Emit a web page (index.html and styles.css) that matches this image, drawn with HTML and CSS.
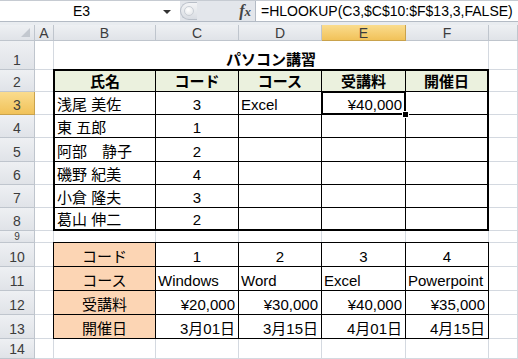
FILE: index.html
```html
<!DOCTYPE html>
<html lang="ja">
<head>
    <meta charset="UTF-8">
    <title>パソコン講習</title>
    <link rel="stylesheet" href="styles.css">
</head>
<body>
    <div class="app">
        <div class="formula-bar">
            <div class="name-box">
                <span class="name">E3</span>
                <span class="drop"></span>
            </div>
            <div class="bar-mid">
                <span class="grip"><span class="grip-dot"></span></span>
                <span class="fx">f<span class="fx-x">x</span></span>
            </div>
            <div class="formula">=HLOOKUP(C3,$C$10:$F$13,3,FALSE)</div>
        </div>
        <div class="bar-gap"></div>

        <div class="sheet">
            <!-- column headers -->
            <div class="hd corner"><span class="tri"></span></div>
            <div class="hd col">A</div>
            <div class="hd col">B</div>
            <div class="hd col">C</div>
            <div class="hd col">D</div>
            <div class="hd col active">E</div>
            <div class="hd col">F</div>
            <div class="hd col"></div>

            <!-- row 1 -->
            <div class="hd row">1</div>
            <div class="g"></div>
            <div class="g title">パソコン講習</div>
            <div class="g"></div>

            <div class="hd row">2</div><div class="g"></div><div class="g"></div>
            <div class="hd row active">3</div><div class="g"></div><div class="g"></div>
            <div class="hd row">4</div><div class="g"></div><div class="g"></div>
            <div class="hd row">5</div><div class="g"></div><div class="g"></div>
            <div class="hd row">6</div><div class="g"></div><div class="g"></div>
            <div class="hd row">7</div><div class="g"></div><div class="g"></div>
            <div class="hd row">8</div><div class="g"></div><div class="g"></div>

            <div class="hd row short">9</div>
            <div class="g"></div><div class="g"></div><div class="g"></div><div class="g"></div>
            <div class="g"></div><div class="g"></div><div class="g"></div>

            <div class="hd row">10</div><div class="g"></div><div class="g"></div>
            <div class="hd row">11</div><div class="g"></div><div class="g"></div>
            <div class="hd row">12</div><div class="g"></div><div class="g"></div>
            <div class="hd row">13</div><div class="g"></div><div class="g"></div>

            <div class="hd row">14</div>
            <div class="g"></div><div class="g"></div><div class="g"></div><div class="g"></div>
            <div class="g"></div><div class="g"></div><div class="g"></div>

            <!-- 受講者一覧 -->
            <div class="t1">
                <div class="tc th">氏名</div>
                <div class="tc th">コード</div>
                <div class="tc th">コース</div>
                <div class="tc th">受講料</div>
                <div class="tc th">開催日</div>

                <div class="tc">浅尾 美佐</div>
                <div class="tc ctr">3</div>
                <div class="tc">Excel</div>
                <div class="tc rt selected">¥40,000<span class="sel"><span class="handle"></span></span></div>
                <div class="tc"></div>

                <div class="tc">東 五郎</div>
                <div class="tc ctr">1</div>
                <div class="tc"></div><div class="tc"></div><div class="tc"></div>

                <div class="tc">阿部　静子</div>
                <div class="tc ctr">2</div>
                <div class="tc"></div><div class="tc"></div><div class="tc"></div>

                <div class="tc">磯野 紀美</div>
                <div class="tc ctr">4</div>
                <div class="tc"></div><div class="tc"></div><div class="tc"></div>

                <div class="tc">小倉 隆夫</div>
                <div class="tc ctr">3</div>
                <div class="tc"></div><div class="tc"></div><div class="tc"></div>

                <div class="tc">葛山 伸二</div>
                <div class="tc ctr">2</div>
                <div class="tc"></div><div class="tc"></div><div class="tc"></div>
            </div>

            <!-- コース表 -->
            <div class="t2">
                <div class="tc lab">コード</div>
                <div class="tc ctr">1</div>
                <div class="tc ctr">2</div>
                <div class="tc ctr">3</div>
                <div class="tc ctr">4</div>

                <div class="tc lab">コース</div>
                <div class="tc">Windows</div>
                <div class="tc">Word</div>
                <div class="tc">Excel</div>
                <div class="tc">Powerpoint</div>

                <div class="tc lab">受講料</div>
                <div class="tc rt">¥20,000</div>
                <div class="tc rt">¥30,000</div>
                <div class="tc rt">¥40,000</div>
                <div class="tc rt">¥35,000</div>

                <div class="tc lab">開催日</div>
                <div class="tc rt">3月01日</div>
                <div class="tc rt">3月15日</div>
                <div class="tc rt">4月01日</div>
                <div class="tc rt">4月15日</div>
            </div>
        </div>
    </div>
</body>
</html>
```

FILE: styles.css
```css
* {
    box-sizing: border-box;
}
body {
    margin: 0;
    background-color: #ffffff;
    font-family: "Liberation Sans", "Noto Sans CJK JP", sans-serif;
    color: #000;
}
.app {
    width: 518px;
    height: 359px;
    overflow: hidden;
}

/* formula bar */
.formula-bar {
    display: flex;
    height: 22px;
    border-top: 1px solid #c6cbd2;
    border-bottom: 1px solid #b4bbc5;
    background-color: #fff;
}
.name-box {
    display: flex;
    align-items: center;
    width: 180px;
}
.name {
    width: 163px;
    text-align: center;
    font-size: 14px;
    line-height: 20px;
}
.drop {
    width: 0;
    height: 0;
    margin-top: 2px;
    border-left: 4px solid transparent;
    border-right: 4px solid transparent;
    border-top: 4px solid #333;
}
.bar-mid {
    display: flex;
    align-items: center;
    width: 75px;
    background-color: #e3e6eb;
}
.grip {
    display: flex;
    align-items: center;
    justify-content: center;
    width: 17px;
    height: 18px;
    border: 1px solid #b9bfc8;
    border-right: none;
    border-radius: 9px 0 0 9px;
    background: linear-gradient(#f3f4f6, #d9dde3);
}
.grip-dot {
    width: 10px;
    height: 10px;
    border-radius: 50%;
    background: radial-gradient(circle at 40% 35%, #ffffff, #dfe2e6);
    border: 1px solid #c9ced5;
}
.fx {
    margin-left: auto;
    margin-right: 4px;
    font-family: "Liberation Serif", serif;
    font-style: italic;
    font-weight: bold;
    font-size: 16px;
    color: #444;
}
.fx-x {
    font-size: 13px;
}
.formula {
    flex: 1;
    padding-left: 5px;
    border-left: 1px solid #b4bbc5;
    font-size: 14px;
    line-height: 20px;
    white-space: nowrap;
}
.bar-gap {
    height: 3px;
    background-color: #e9ecf0;
}

/* sheet */
.sheet {
    display: grid;
    grid-template-columns: 35px 19px 102px 83px 83px 84px 83px 29px;
    grid-template-rows: 16px 29px 22px 23px 23px 24px 23px 23px 23px 12px 24px 24px 24px 24px 20px;
}
.hd {
    display: flex;
    justify-content: center;
    overflow: hidden;
    background: linear-gradient(#eef0f3, #e0e3e8);
    border-right: 1px solid #bfc5cd;
    border-bottom: 1px solid #bfc5cd;
    color: #3c3c3c;
    font-size: 14px;
    line-height: 14px;
}
.hd.col {
    align-items: center;
}
.hd.row {
    align-items: flex-end;
    padding-bottom: 2px;
}
.hd.row.short {
    align-items: center;
    padding-bottom: 0;
    font-size: 10px;
    line-height: 10px;
}
.hd.active {
    background: linear-gradient(#fadc8e, #f1c259);
    border-color: #c9a24c;
}
.corner {
    position: relative;
}
.tri {
    position: absolute;
    right: 4px;
    bottom: 3px;
    width: 0;
    height: 0;
    border-left: 9px solid transparent;
    border-bottom: 9px solid #c3c8cf;
}
.g {
    border-right: 1px solid #d4d9e0;
    border-bottom: 1px solid #d4d9e0;
}
.title {
    grid-column: span 5;
    display: flex;
    justify-content: center;
    align-items: flex-end;
    padding-bottom: 2px;
    font-size: 15px;
    line-height: 15px;
    font-weight: bold;
}

/* tables */
.t1,
.t2 {
    display: grid;
    margin: -1px 0 0 -1px;
    background-color: #fff;
}
.t1 {
    grid-column: 3 / 8;
    grid-row: 3 / 10;
    grid-template-columns: 101px 83px 83px 84px 81px;
    grid-template-rows: 21px 23px 23px 24px 23px 23px 21px;
    border: 2px solid #000;
}
.t2 {
    grid-column: 3 / 8;
    grid-row: 11 / 15;
    grid-template-columns: 102px 83px 83px 84px 82px;
    grid-template-rows: 24px 24px 24px 23px;
    border: 1px solid #000;
}
.tc {
    display: flex;
    align-items: flex-end;
    padding: 0 2px 2px;
    border-right: 1px solid #000;
    border-bottom: 1px solid #000;
    font-size: 15px;
    line-height: 15px;
    white-space: nowrap;
}
.tc:nth-child(5n) {
    border-right: none;
}
.tc:nth-last-child(-n+5) {
    border-bottom: none;
}
.ctr {
    justify-content: center;
}
.rt {
    justify-content: flex-end;
    padding-right: 3px;
}
.th {
    justify-content: center;
    align-items: center;
    padding-bottom: 0;
    background-color: #ebf1de;
    font-weight: bold;
}
.lab {
    justify-content: center;
    background-color: #fcd5b4;
}

/* active cell */
.selected {
    position: relative;
}
.sel {
    position: absolute;
    top: -1px;
    left: -1px;
    right: -1px;
    bottom: -1px;
    border: 2px solid #000;
    box-shadow: inset 0 0 0 1px #fff;
}
.handle {
    position: absolute;
    right: -5px;
    bottom: -5px;
    width: 7px;
    height: 7px;
    background-color: #000;
    border: 1px solid #fff;
}
```
